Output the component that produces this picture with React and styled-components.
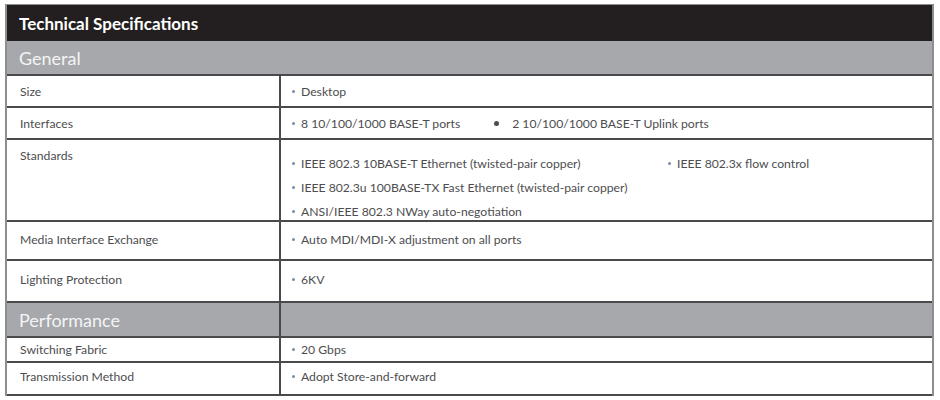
import React from "react";
import styled, { createGlobalStyle } from "styled-components";

const GlobalStyle = createGlobalStyle`
  body {
    margin: 0;
    background: #ffffff;
    font-family: Lato, "Open Sans", sans-serif;
  }
`;

const Page = styled.div`
  padding: 4px 0 0 5px;
`;

const Sheet = styled.div`
  width: 929px;
  box-sizing: border-box;
  border-left: 2px solid #8d8e91;
  border-right: 2px solid #8d8e91;
  border-top: 1px solid #8d8e91;
`;

const TitleBar = styled.div`
  height: 36px;
  display: flex;
  align-items: center;
  padding-left: 12px;
  background: #231f20;
  color: #ffffff;
  font-weight: 700;
  font-size: 17px;
`;

const Row = styled.div`
  display: grid;
  grid-template-columns: 274px 1fr;
  height: ${({ h }) => h}px;
  box-sizing: border-box;
  border-bottom: 2px solid #4a4a4c;
  background: ${({ shaded }) => (shaded ? "#a6a8ab" : "#ffffff")};
`;

const SectionBand = styled.div`
  height: 35px;
  box-sizing: border-box;
  border-bottom: 2px solid #4a4a4c;
  background: #a6a8ab;
  display: flex;
  align-items: center;
  padding-left: 12px;
  color: #f4f4f5;
  font-size: 18px;
`;

const Label = styled.div`
  display: flex;
  align-items: ${({ top }) => (top ? "flex-start" : "center")};
  padding-left: 13px;
  padding-top: ${({ top }) => (top ? 8 : 0)}px;
  padding-bottom: ${({ lift }) => lift || 0}px;
  border-right: 2px solid #4a4a4c;
  color: #4d4d4f;
  font-size: 12.2px;
  ${({ section }) => section && `color: #f4f4f5; font-size: 18px; padding-left: 12px;`}
`;

const Value = styled.div`
  display: flex;
  align-items: center;
  padding-left: 11px;
  padding-bottom: ${({ lift }) => lift || 0}px;
  color: #4d4d4f;
  font-size: 12.2px;
`;

const Item = styled.span`
  display: inline-flex;
  align-items: center;
  white-space: nowrap;
  &::before {
    content: "";
    width: 3px;
    height: 3px;
    border-radius: 50%;
    background: #7d8aa3;
    margin-right: 6px;
  }
`;

const BigDot = styled.span`
  width: 5px;
  height: 5px;
  border-radius: 50%;
  background: #4d4d4f;
  margin: 0 13px 0 34px;
`;

const StdGrid = styled.div`
  display: grid;
  grid-template-columns: 376px auto;
  grid-auto-rows: 24px;
  align-content: start;
  padding: 11px 0 0 11px;
  color: #4d4d4f;
  font-size: 12.2px;
`;

const Spec = ({ label, h, lift, children }) => (
  <Row h={h}>
    <Label lift={lift}>{label}</Label>
    <Value lift={lift}>{children}</Value>
  </Row>
);

export default function App() {
  return (
    <>
      <GlobalStyle />
      <Page>
        <Sheet>
          <TitleBar>Technical Specifications</TitleBar>
          <SectionBand>General</SectionBand>
          <Spec label="Size" h={32}>
            <Item>Desktop</Item>
          </Spec>
          <Spec label="Interfaces" h={32}>
            <Item>8 10/100/1000 BASE-T ports</Item>
            <BigDot />
            <span>2 10/100/1000 BASE-T Uplink ports</span>
          </Spec>
          <Row h={82}>
            <Label top>Standards</Label>
            <StdGrid>
              <Item>IEEE 802.3 10BASE-T Ethernet (twisted-pair copper)</Item>
              <Item>IEEE 802.3x flow control</Item>
              <Item>IEEE 802.3u 100BASE-TX Fast Ethernet (twisted-pair copper)</Item>
              <span />
              <Item>ANSI/IEEE 802.3 NWay auto-negotiation</Item>
            </StdGrid>
          </Row>
          <Spec label="Media Interface Exchange" h={39} lift={2}>
            <Item>Auto MDI/MDI-X adjustment on all ports</Item>
          </Spec>
          <Spec label="Lighting Protection" h={42} lift={4}>
            <Item>6KV</Item>
          </Spec>
          <Row h={35} shaded>
            <Label section>Performance</Label>
            <Value />
          </Row>
          <Spec label="Switching Fabric" h={25}>
            <Item>20 Gbps</Item>
          </Spec>
          <Spec label="Transmission Method" h={33} lift={4}>
            <Item>Adopt Store-and-forward</Item>
          </Spec>
        </Sheet>
      </Page>
    </>
  );
}
